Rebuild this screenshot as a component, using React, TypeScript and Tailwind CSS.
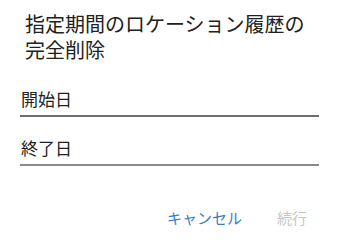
export default function App() {
  return (
    <div
      className="w-[339px] h-[252px] bg-white flex flex-col overflow-hidden"
      style={{ fontFamily: '"Noto Sans CJK JP", "Noto Sans", sans-serif' }}
    >
      <div className="pl-[25px] pr-[24px] pt-[11px] text-[20px] leading-[26px] text-[#212121]">
        指定期間のロケーション履歴の完全削除
      </div>
      <div className="px-[20px] mt-[24px] flex flex-col">
        <div className="border-b-[2px] border-[#6e6e6e] text-[17px] leading-[24px] text-[#212121] pb-[4px] pl-[1px]">
          開始日
        </div>
        <div className="mt-[19px] border-b-[2px] border-[#8a8a8a] text-[17px] leading-[24px] text-[#212121] pb-[4px] pl-[1px]">
          終了日
        </div>
      </div>
      <div className="mt-[42px] flex justify-end pr-[32px] gap-[35px] text-[15px] leading-[20px]">
        <span className="text-[#3a7bc8]">キャンセル</span>
        <span className="text-[#c6c6c6]">続行</span>
      </div>
    </div>
  );
}
